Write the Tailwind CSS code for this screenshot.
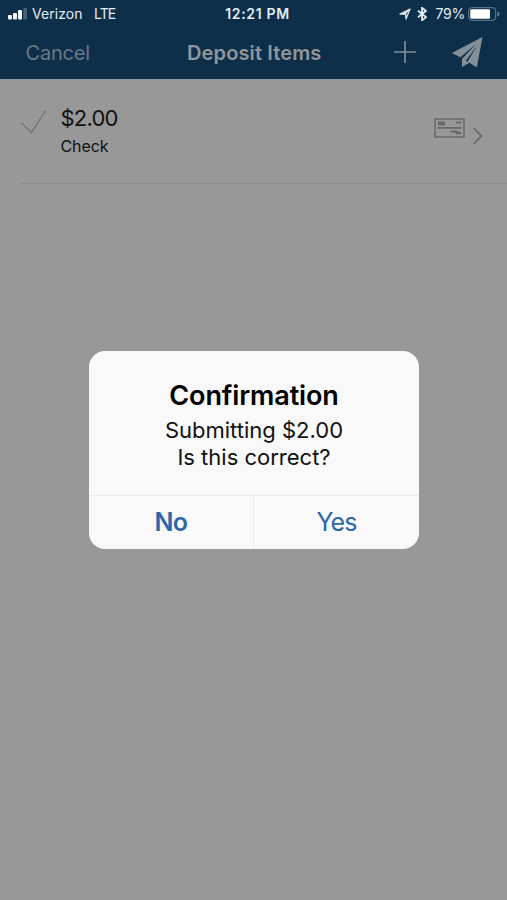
<!DOCTYPE html>
<html lang="en">
<head>
<meta charset="utf-8">
<title>Deposit Items</title>
<script src="https://cdn.jsdelivr.net/npm/@tailwindcss/browser@4"></script>
</head>
<body class="w-[507px] h-[900px] overflow-hidden bg-[#989898] font-[Inter,'Liberation_Sans',sans-serif] relative whitespace-nowrap">
<header class="h-[79px] bg-[#0e2f4a] border-b border-[#0a2c49]">
  <div class="h-7 pl-2 pr-[7px] grid grid-cols-[1fr_auto_1fr] items-center text-[#e2edf4] text-[14px] leading-7">
    <div class="flex items-center">
      <svg class="w-5 h-3 mr-1" viewBox="0 0 20 12"><g fill="#f2f8fc"><rect y="7" width="4" height="4.5" rx="1"/><rect x="5" y="5" width="4" height="6.5" rx="1"/><rect x="10" y="2" width="4" height="9.5" rx="1"/></g><rect x="15.3" width="3.7" height="11.5" rx="1" fill="#496277"/></svg>
      <span class="w-[62px] tracking-[0.05px]">Verizon</span><span class="tracking-[-0.9px]">LTE</span>
    </div>
    <div class="font-semibold tracking-[0.65px] pl-[7px]">12:21 PM</div>
    <div class="flex items-center justify-end">
      <svg class="w-3 h-3 mr-[6px]" viewBox="0 0 12 12"><path d="M1 6 11 1 7 11 6.6 5.9Z" fill="none" stroke="#d6e4ee" stroke-width="1.3" stroke-linejoin="round"/><path d="M1 6 11 1 6.6 6.4Z" fill="#d6e4ee"/></svg>
      <svg class="w-[10px] h-[14px] mr-[8px]" viewBox="0 0 10 14"><path d="m1 3.7 8 6.4-4 3.3V.8l4 3-8 6.4" fill="none" stroke="#e2edf4" stroke-width="1.8"/></svg>
      <span class="tracking-[-0.2px] mr-[3px]">79%</span>
      <svg class="w-8 h-[14px]" viewBox="0 0 32 14"><rect x=".7" y=".7" width="27" height="12.6" rx="3" fill="none" stroke="#6c8191"/><rect x="2.3" y="2.3" width="19.7" height="9.4" rx="1.2" fill="#fff"/><path d="M29.5 4.5q2 .5 2 2.5t-2 2.5Z" fill="#6c8191"/></svg>
    </div>
  </div>
  <div class="h-[50px] pl-[25.5px] pr-6 grid grid-cols-[1fr_auto_1fr] items-center text-[#8b9297] text-[20px] leading-[50px]">
    <div class="text-[#697985] tracking-[-0.2px]">Cancel</div>
    <div class="font-semibold tracking-[0.13px] text-[#929699]">Deposit Items</div>
    <div class="flex items-center justify-end gap-[35px]">
      <svg class="w-[22px] h-[22px] -mt-[2px]" viewBox="0 0 22 22"><path d="M11 0v22M0 11h22" stroke="#84909a" stroke-width="1.6"/></svg>
      <svg class="w-8 h-8" viewBox="0 0 32 32"><path d="M31.5 0 .8 16 9.5 20.3 25 7 11 22V30L14.5 24 26 9 16.5 24.5 25.8 30.5Z" fill="#858f97"/><path d="M11 30V22L14.6 23.8 18.5 25.8Z" fill="#858f97"/></svg>
    </div>
  </div>
</header>
<main class="ml-5">
  <div class="h-[105px] border-b border-[#8c8c8c] flex items-start text-[#111]">
    <svg class="w-[27px] h-6 mt-[31px]" viewBox="0 0 27 24"><path d="m1.5 13 10 9.5L25.5.8" fill="none" stroke="#757575" stroke-width="1.4"/></svg>
    <div class="ml-[13.5px] mt-[25px] flex-1">
      <div class="text-[22px] leading-[29px] tracking-[-0.8px]">$2.00</div>
      <div class="text-[16px] leading-[26px] tracking-[-0.1px]">Check</div>
    </div>
    <svg class="w-[31px] h-5 mt-[39px]" viewBox="0 0 31 20"><path d="M1 1h29v18H1Z" fill="none" stroke="#696969" stroke-width="1.5"/><path d="M4 3.5h7v4H4ZM22 3.5h5.5v2H22ZM3.5 9h24.5v1.7H3.5ZM16.5 12.8l6-.5 5 2.3v1.4l-5 .5-2-1.9-4-.2Z" fill="#696969"/></svg>
    <svg class="w-[11px] h-[18px] ml-[7px] mr-6 mt-12" viewBox="0 0 11 18"><path d="m1.5 1 8 8-8 8" fill="none" stroke="#6e6e6e" stroke-width="1.8"/></svg>
  </div>
</main>
<div role="dialog" class="absolute left-[89px] top-[351px] w-[330px] h-[198px] rounded-[16px] bg-[#f9f9f9] overflow-hidden flex flex-col text-center">
  <div class="h-[145px] border-b border-[#ececec] pt-[28px] text-black">
    <h1 class="font-semibold text-[27px] leading-[34px] tracking-[-0.13px]">Confirmation</h1>
    <p class="mt-[4px] text-[22px] leading-[27px] text-[#111]">Submitting $2.00<br>Is this correct?</p>
  </div>
  <div class="flex-1 grid grid-cols-2 text-[25px] leading-[53px] text-[#2c66a8]">
    <button class="font-semibold border-r border-[#ececec] tracking-[-0.5px]">No</button>
    <button class="tracking-[-0.9px]">Yes</button>
  </div>
</div>
</body>
</html>
